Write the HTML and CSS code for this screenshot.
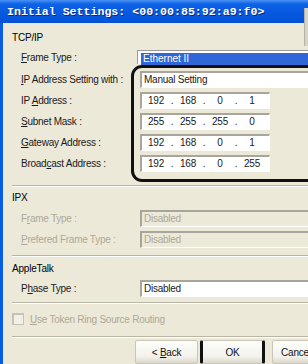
FILE: index.html
```html
<!DOCTYPE html>
<html lang="en">
<head>
    <meta charset="UTF-8">
    <title>Initial Settings</title>
    <link rel="stylesheet" href="styles.css">
</head>
<body>
    <div class="dialog">
        <div class="titlebar">Initial Settings: &lt;00:00:85:92:a9:f0&gt;</div>
        <div class="frame">
            <div class="content">
                <div class="heading h-tcp">TCP/IP</div>
                <div class="row row-frame">
                    <div class="label"><u>F</u>rame Type :</div>
                    <div class="select-box"><span class="selected">Ethernet II</span></div>
                </div>
                <div class="row row-first">
                    <div class="label"><u>I</u>P Address Setting with :</div>
                    <div class="field wide">Manual Setting</div>
                </div>
                <div class="row">
                    <div class="label">IP <u>A</u>ddress :</div>
                    <div class="field ip"><span>192</span><i>.</i><span>168</span><i>.</i><span>0</span><i>.</i><span>1</span></div>
                </div>
                <div class="row">
                    <div class="label"><u>S</u>ubnet Mask :</div>
                    <div class="field ip"><span>255</span><i>.</i><span>255</span><i>.</i><span>255</span><i>.</i><span>0</span></div>
                </div>
                <div class="row">
                    <div class="label"><u>G</u>ateway Address :</div>
                    <div class="field ip"><span>192</span><i>.</i><span>168</span><i>.</i><span>0</span><i>.</i><span>1</span></div>
                </div>
                <div class="row">
                    <div class="label">Broad<u>c</u>ast Address :</div>
                    <div class="field ip"><span>192</span><i>.</i><span>168</span><i>.</i><span>0</span><i>.</i><span>255</span></div>
                </div>

                <div class="sep sep-tcp"></div>

                <div class="heading h-ipx">IPX</div>
                <div class="row row-ipx disabled">
                    <div class="label">F<u>r</u>ame Type :</div>
                    <div class="field wide off">Disabled</div>
                </div>
                <div class="row disabled">
                    <div class="label"><u>P</u>refered Frame Type :</div>
                    <div class="field wide off">Disabled</div>
                </div>

                <div class="sep sep-ipx"></div>

                <div class="heading h-apple">AppleTalk</div>
                <div class="row row-apple">
                    <div class="label">P<u>h</u>ase Type :</div>
                    <div class="field wide">Disabled</div>
                </div>

                <div class="sep sep-apple"></div>

                <div class="check-row">
                    <span class="checkbox"></span>
                    <span class="check-text"><u>U</u>se Token Ring Source Routing</span>
                </div>

                <div class="sep sep-check"></div>

                <div class="buttons">
                    <div class="btn">&lt;&nbsp;<u>B</u>ack</div>
                    <div class="btn btn-ok">OK</div>
                    <div class="btn btn-cancel">Cancel</div>
                </div>
            </div>
        </div>

        <!-- hand-drawn highlight around the address fields -->
        <div class="highlight"></div>
        <div class="edge"></div>
    </div>
</body>
</html>
```

FILE: styles.css
```css
body {
    margin: 0;
    width: 308px;
    height: 364px;
    overflow: hidden;
    background-color: #ece9d8;
    font-family: "Liberation Sans", Arial, sans-serif;
    font-size: 10px;
    color: #1a1a1a;
}
u {
    text-decoration: underline;
    text-underline-offset: 1px;
}
.dialog {
    position: relative;
    width: 360px;
    height: 364px;
}
.titlebar {
    height: 23px;
    padding-left: 7px;
    display: flex;
    align-items: center;
    background: linear-gradient(#4a92f5 0, #0d62e6 4px, #0758df 14px, #0552d6 23px);
    color: #fff;
    font-family: "Liberation Mono", "Courier New", monospace;
    font-weight: bold;
    font-size: 11.6px;
    text-shadow: 1px 1px 0 #0a2a80;
    white-space: nowrap;
}
.frame {
    display: flex;
    height: 341px;
    border-left: 3px solid #0a5ce2;
}
.content {
    flex: 1;
    padding-left: 9px;
}
.heading {
    height: 14px;
    line-height: 14px;
    color: #000;
    letter-spacing: -0.2px;
}
.h-tcp {
    margin-top: 8px;
}
.h-ipx {
    margin-top: 4px;
}
.h-apple {
    margin-top: 5px;
}
.row {
    display: flex;
    align-items: center;
    height: 17px;
    margin-top: 4px;
}
.row-frame {
    height: 14px;
    margin-top: 5px;
}
.row-first {
    margin-top: 7px;
}
.row-ipx {
    margin-top: 5px;
}
.row-apple {
    margin-top: 4px;
}
.label {
    width: 119px;
    padding-left: 9px;
    letter-spacing: -0.25px;
    white-space: nowrap;
}
.disabled .label {
    color: #aca899;
}
.select-box {
    flex: 1;
    height: 14px;
    margin-left: -3px;
    box-sizing: border-box;
    border-top: 1px solid #9a9a9a;
    border-left: 1px solid #9a9a9a;
    background: #fff;
    padding: 2px 0 0 3px;
}
.selected {
    display: block;
    height: 12px;
    line-height: 12px;
    padding-left: 2px;
    background: #2f66d8;
    color: #fff;
}
.field {
    height: 17px;
    box-sizing: border-box;
    border-top: 2px solid #a8a69c;
    border-left: 2px solid #a8a69c;
    border-right: 1px solid #fff;
    border-bottom: 1px solid #fff;
    background: #fff;
    line-height: 14px;
    padding-left: 2px;
    letter-spacing: -0.25px;
    white-space: nowrap;
}
.wide {
    flex: 1;
}
.off {
    background: #ece9d8;
    color: #aca899;
}
.ip {
    width: 130px;
    display: flex;
    padding-left: 1px;
}
.ip span {
    width: 26px;
    text-align: center;
}
.ip i {
    width: 6px;
    font-style: normal;
    text-align: center;
}
.sep {
    height: 0;
    border-top: 1px solid #b8b5a6;
    border-bottom: 1px solid #fff;
}
.sep-tcp {
    margin-top: 13px;
}
.sep-ipx {
    margin-top: 7px;
}
.sep-apple {
    margin-top: 5px;
}
.sep-check {
    margin-top: 11px;
}
.check-row {
    display: flex;
    align-items: center;
    height: 12px;
    margin-top: 9px;
}
.checkbox {
    width: 9px;
    height: 9px;
    border: 1px solid #c4c2b6;
    border-top-width: 2px;
    border-left-width: 2px;
    background: #f1efe6;
}
.check-text {
    margin-left: 6px;
    color: #aca899;
    letter-spacing: -0.25px;
}
.buttons {
    display: flex;
    margin-top: 2px;
    padding-left: 123px;
}
.btn {
    width: 63px;
    height: 24px;
    box-sizing: border-box;
    border: 1px solid #c9c6b8;
    border-radius: 2px;
    background: linear-gradient(#fdfdfb, #f3f2ec 70%, #dcd8cb);
    display: flex;
    align-items: center;
    justify-content: center;
    color: #111;
    letter-spacing: -0.2px;
}
.btn-ok {
    width: 65px;
    margin-left: 2px;
    border-left: 3px solid #111;
    border-right: 3px solid #111;
}
.btn-cancel {
    margin-left: 7px;
    justify-content: flex-start;
    padding-left: 8px;
}
.highlight {
    position: absolute;
    left: 131px;
    top: 65px;
    width: 210px;
    height: 111px;
    border: 3px solid #111;
    border-radius: 11px;
}
.edge {
    position: absolute;
    left: 304px;
    top: 8px;
    width: 3px;
    height: 38px;
    background: #d7d4c8;
    border-left: 1px solid #b5b2a5;
}
```
